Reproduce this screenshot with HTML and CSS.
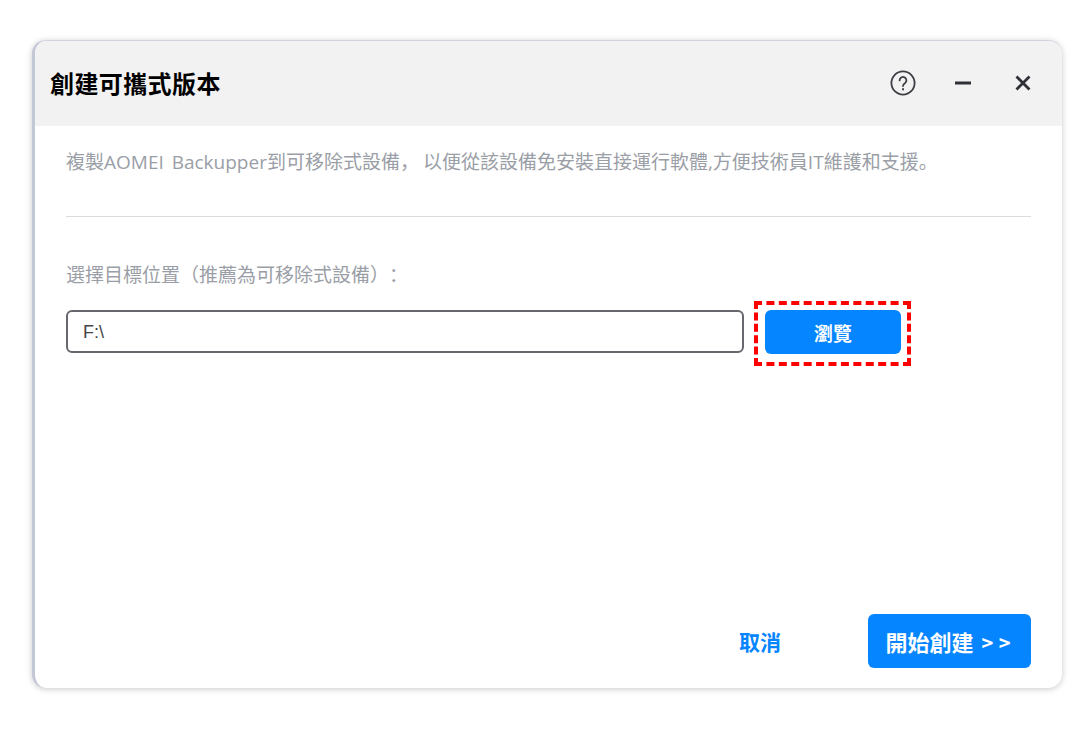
FILE: index.html
```html
<!DOCTYPE html>
<html lang="zh-Hant">
<head>
<meta charset="utf-8">
<title>創建可攜式版本</title>
<link rel="stylesheet" href="styles.css">
</head>
<body>
<div class="dialog">
  <header class="header">
    <h1 class="title">創建可攜式版本</h1>
    <div class="controls">
      <svg class="icon" width="28" height="28" viewBox="0 0 28 28" fill="none" stroke="#3d3f45" stroke-width="1.8" stroke-linecap="round">
        <circle cx="14" cy="14" r="11.6"/>
        <path d="M10.6 11.4a3.4 3.4 0 1 1 5.3 2.8c-1.2.8-1.9 1.4-1.9 2.8"/>
        <path d="M14 20v.4" stroke-width="2"/>
      </svg>
      <svg class="icon" width="18" height="18" viewBox="0 0 18 18" fill="none" stroke="#2f3136" stroke-width="3">
        <path d="M1 9h16"/>
      </svg>
      <svg class="icon close" width="18" height="18" viewBox="0 0 18 18" fill="none" stroke="#2f3136" stroke-width="2.8">
        <path d="M2.500 2.500l13 13M15.500 2.500l-13 13"/>
      </svg>
    </div>
  </header>
  <main class="body">
    <p class="desc">複製AOMEI Backupper到可移除式設備<span class="comma">，</span>以便從該設備免安裝直接運行軟體,方便技術員IT維護和支援。</p>
    <hr class="rule">
    <p class="label">選擇目標位置（推薦為可移除式設備）：</p>
    <div class="row">
      <div class="input">F:\</div>
      <div class="highlight"><button class="browse">瀏覽</button></div>
    </div>
    <div class="spacer"></div>
    <footer class="footer">
      <button class="cancel">取消</button>
      <button class="start">開始創建 <span class="arrows">&gt; &gt;</span></button>
    </footer>
  </main>
</div>
</body>
</html>
```

FILE: styles.css
```css
* { box-sizing: border-box; font-feature-settings: "locl" 0; }
html, body { margin: 0; height: 100%; background: #fff; }
body {
  padding: 40px 30px 48px 32px;
  font-family: "Noto Sans CJK SC", "Liberation Sans", sans-serif;
  overflow: hidden;
}
.dialog {
  height: 648px;
  display: flex;
  flex-direction: column;
  background: #fff;
  border-radius: 14px;
  border-left: 3px solid #c3c8d6;
  border-top: 1px solid #d2d2e0;
  box-shadow: 0 1px 6px rgba(0, 0, 0, 0.22);
  overflow: hidden;
}
.header {
  height: 85px;
  flex: none;
  background: #f2f2f3;
  display: flex;
  align-items: center;
  justify-content: space-between;
  padding: 0 30px 2px 15px;
}
.title {
  margin: 0;
  font-size: 24px;
  letter-spacing: 0.4px;
  line-height: 32px;
  font-weight: 700;
  color: #000;
}
.controls { display: flex; align-items: center; gap: 37px; }
.close { margin-left: 5px; }
.icon { display: block; }
.body {
  flex: 1;
  display: flex;
  flex-direction: column;
  padding: 0 31px 20px 31px;
}
.desc {
  margin: 24px 0 0;
  font-family: "Open Sans", "Noto Sans CJK SC", sans-serif;
  font-size: 19px;
  word-spacing: 3px;
  line-height: 24px;
  color: #9a9ea6;
  white-space: nowrap;
}
.comma { letter-spacing: 4px; }
.rule {
  margin: 42px 0 0;
  border: 0;
  height: 1px;
  background: #dcdcdc;
}
.label {
  margin: 45px 0 0;
  font-size: 19px;
  line-height: 24px;
  color: #9a9ea6;
  white-space: nowrap;
  text-spacing-trim: space-all;
}
.row {
  display: flex;
  align-items: flex-start;
  gap: 10px;
  margin-top: 15px;
}
.input {
  width: 678px;
  height: 43px;
  margin-top: 9px;
  border: 2px solid #66686e;
  border-radius: 6px;
  padding-left: 15px;
  font-size: 18px;
  line-height: 40px;
  color: #444;
  font-family: "Liberation Sans", sans-serif;
}
.highlight {
  border: 4px dashed #ff0000;
  padding: 5px 6px 8px 7px;
}
.browse {
  display: block;
  width: 136px;
  height: 44px;
  border: 0;
  border-radius: 6px;
  background: #0585ff;
  color: #fff;
  font: 700 19px "Noto Sans CJK SC", sans-serif;
  font-feature-settings: "locl" 0;
}
.spacer { flex: 1; }
.footer {
  display: flex;
  align-items: center;
  justify-content: flex-end;
  gap: 87px;
}
.cancel {
  border: 0;
  background: none;
  padding: 0;
  color: #0585ff;
  font: 700 21px "Noto Sans CJK SC", sans-serif;
  font-feature-settings: "locl" 0;
}
.start {
  width: 163px;
  height: 54px;
  border: 0;
  border-radius: 6px;
  background: #0585ff;
  color: #fff;
  font: 700 22px "Noto Sans CJK SC", sans-serif;
  font-feature-settings: "locl" 0;
  white-space: nowrap;
  padding: 0 3px 0 0;
}
.arrows { margin-left: 3px; font-size: 20px; word-spacing: 1px; }
```
